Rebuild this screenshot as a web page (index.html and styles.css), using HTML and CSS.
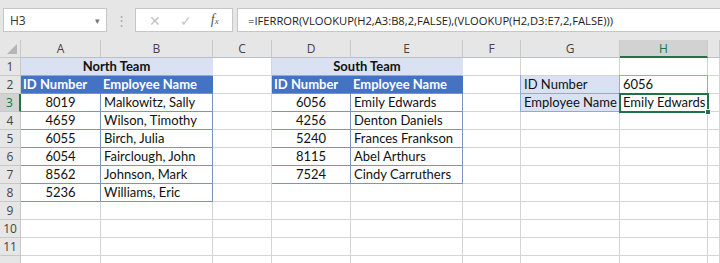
FILE: index.html
```html
<!DOCTYPE html>
<html lang="en">
<head>
    <meta charset="UTF-8">
    <title>Lookup across two teams</title>
    <link rel="stylesheet" href="styles.css">
</head>
<body>
    <div class="toolbar">
        <div class="name-box">H3<span class="caret">&#9662;</span></div>
        <div class="grip">&#8942;</div>
        <div class="fx-buttons">
            <span class="btn-x">&#10005;</span>
            <span class="btn-ok">&#10003;</span>
            <span class="btn-fx"><i>f</i><small>x</small></span>
        </div>
        <div class="formula">=IFERROR(VLOOKUP(H2,A3:B8,2,FALSE),(VLOOKUP(H2,D3:E7,2,FALSE)))</div>
    </div>

    <div class="sheet">
        <!-- column headers -->
        <div class="c corner"><span class="tri"></span></div>
        <div class="c ch">A</div><div class="c ch">B</div><div class="c ch">C</div><div class="c ch">D</div>
        <div class="c ch">E</div><div class="c ch">F</div><div class="c ch">G</div><div class="c ch sel">H</div><div class="c ch"></div>

        <!-- 1 -->
        <div class="c rh">1</div>
        <div class="c title span2">North Team</div>
        <div class="c"></div>
        <div class="c title span2">South Team</div>
        <div class="c"></div><div class="c"></div><div class="c"></div><div class="c"></div>

        <!-- 2 -->
        <div class="c rh">2</div>
        <div class="c head">ID Number</div><div class="c head">Employee Name</div>
        <div class="c"></div>
        <div class="c head">ID Number</div><div class="c head">Employee Name</div>
        <div class="c"></div>
        <div class="c label">ID Number</div><div class="c boxed">6056</div><div class="c"></div>

        <!-- 3 -->
        <div class="c rh active">3</div>
        <div class="c num tb">8019</div><div class="c tb">Malkowitz, Sally</div>
        <div class="c"></div>
        <div class="c num tb">6056</div><div class="c tb">Emily Edwards</div>
        <div class="c"></div>
        <div class="c label">Employee Name</div><div class="c current">Emily Edwards<span class="handle"></span></div><div class="c"></div>

        <!-- 4 -->
        <div class="c rh">4</div>
        <div class="c num tb">4659</div><div class="c tb">Wilson, Timothy</div>
        <div class="c"></div>
        <div class="c num tb">4256</div><div class="c tb">Denton Daniels</div>
        <div class="c"></div><div class="c"></div><div class="c"></div><div class="c"></div>

        <!-- 5 -->
        <div class="c rh">5</div>
        <div class="c num tb">6055</div><div class="c tb">Birch, Julia</div>
        <div class="c"></div>
        <div class="c num tb">5240</div><div class="c tb">Frances Frankson</div>
        <div class="c"></div><div class="c"></div><div class="c"></div><div class="c"></div>

        <!-- 6 -->
        <div class="c rh">6</div>
        <div class="c num tb">6054</div><div class="c tb">Fairclough, John</div>
        <div class="c"></div>
        <div class="c num tb">8115</div><div class="c tb">Abel Arthurs</div>
        <div class="c"></div><div class="c"></div><div class="c"></div><div class="c"></div>

        <!-- 7 -->
        <div class="c rh">7</div>
        <div class="c num tb">8562</div><div class="c tb">Johnson, Mark</div>
        <div class="c"></div>
        <div class="c num tb">7524</div><div class="c tb">Cindy Carruthers</div>
        <div class="c"></div><div class="c"></div><div class="c"></div><div class="c"></div>

        <!-- 8 -->
        <div class="c rh">8</div>
        <div class="c num tb">5236</div><div class="c tb">Williams, Eric</div>
        <div class="c"></div><div class="c"></div><div class="c"></div>
        <div class="c"></div><div class="c"></div><div class="c"></div><div class="c"></div>

        <div class="c rh">9</div>
        <div class="c"></div><div class="c"></div><div class="c"></div><div class="c"></div><div class="c"></div>
        <div class="c"></div><div class="c"></div><div class="c"></div><div class="c"></div>

        <div class="c rh">10</div>
        <div class="c"></div><div class="c"></div><div class="c"></div><div class="c"></div><div class="c"></div>
        <div class="c"></div><div class="c"></div><div class="c"></div><div class="c"></div>

        <div class="c rh">11</div>
        <div class="c"></div><div class="c"></div><div class="c"></div><div class="c"></div><div class="c"></div>
        <div class="c"></div><div class="c"></div><div class="c"></div><div class="c"></div>

        <div class="c rh"></div>
        <div class="c"></div><div class="c"></div><div class="c"></div><div class="c"></div><div class="c"></div>
        <div class="c"></div><div class="c"></div><div class="c"></div><div class="c"></div>
    </div>
</body>
</html>
```

FILE: styles.css
```css
* { margin: 0; padding: 0; box-sizing: border-box; }
body {
    font-family: Lato, "Liberation Sans", sans-serif;
    font-size: 13px;
    color: #111;
    background: #fff;
    width: 720px;
    height: 263px;
    overflow: hidden;
}

/* formula bar */
.toolbar {
    display: flex;
    align-items: center;
    height: 40px;
    padding: 0 0 0 3px;
    background: #e6e6e6;
}
.name-box, .fx-buttons, .formula {
    height: 24px;
    background: #fff;
    border: 1px solid #c6c6c6;
    display: flex;
    align-items: center;
}
.name-box { width: 104px; padding: 0 6px 0 6px; justify-content: space-between; color: #333; font-family: "Open Sans", sans-serif; font-size: 12px; }
.caret { font-size: 9px; color: #777; }
.grip { width: 28px; text-align: center; color: #aaa; font-size: 13px; }
.fx-buttons { width: 98px; justify-content: space-around; padding: 0 4px; }
.btn-x, .btn-ok { color: #c4c4c4; font-size: 14px; }
.btn-fx { color: #555; font-family: "Liberation Serif", serif; font-size: 14px; }
.btn-fx small { font-size: 9px; font-style: italic; }
.formula { flex: 1; margin-left: 4px; padding-left: 10px; border-right: none; font-family: "Open Sans", sans-serif; font-size: 11.2px; color: #222; }

/* grid */
.sheet {
    display: grid;
    grid-template-columns: 21px 80px 112px 59px 79px 112px 58px 99px 88px 1fr;
    grid-auto-rows: 18px;
}
.c {
    border-right: 1px solid #d4d4d4;
    border-bottom: 1px solid #d4d4d4;
    line-height: 17px;
    padding: 0 3px;
    white-space: nowrap;
    position: relative;
}
.span2 { grid-column: span 2; }

.corner, .ch, .rh {
    background: #e6e6e6;
    color: #444;
    text-align: center;
    font-family: "Open Sans", sans-serif;
    font-size: 12px;
    border-right-color: #c8c8c8;
    border-bottom-color: #c8c8c8;
}
.ch { border-bottom-color: #b9c0cc; }
.ch.sel { background: #d2d2d2; color: #217346; border-bottom: 2px solid #217346; }
.rh { padding: 0; }
.rh.active { background: #d2d2d2; color: #217346; border-right: 2px solid #217346; }
.tri {
    position: absolute;
    right: 3px;
    bottom: 3px;
    border-style: solid;
    border-width: 0 0 10px 10px;
    border-color: transparent transparent #b5b5b5 transparent;
}

/* tables */
.title {
    background: #d9e1f2;
    font-weight: bold;
    text-align: center;
    border-right-color: #d9e1f2;
    border-bottom-color: #8ea9db;
}
.head {
    background: #4472c4;
    color: #fff;
    font-weight: bold;
    padding-left: 2px;
    border-right-color: #4472c4;
    border-bottom-color: #7d93bd;
}
.tb { border-bottom-color: #7d93bd; border-right-color: #7d93bd; }
.num { text-align: center; }

.label {
    background: #d9e1f2;
    border-right-color: #8ea9db;
    border-bottom-color: #8ea9db;
}
.label::before {
    content: "";
    position: absolute;
    left: -1px;
    top: -1px;
    bottom: -1px;
    border-left: 1px solid #8ea9db;
}
.boxed { border-right-color: #8ea9db; border-bottom-color: #8ea9db; }
.boxed::before {
    content: "";
    position: absolute;
    left: -1px;
    right: -1px;
    top: -1px;
    border-top: 1px solid #8ea9db;
}
.current {
    outline: 2px solid #217346;
    outline-offset: -1px;
    z-index: 2;
}
.handle {
    position: absolute;
    right: -4px;
    bottom: -4px;
    width: 6px;
    height: 6px;
    background: #217346;
    border: 1px solid #fff;
}
```
